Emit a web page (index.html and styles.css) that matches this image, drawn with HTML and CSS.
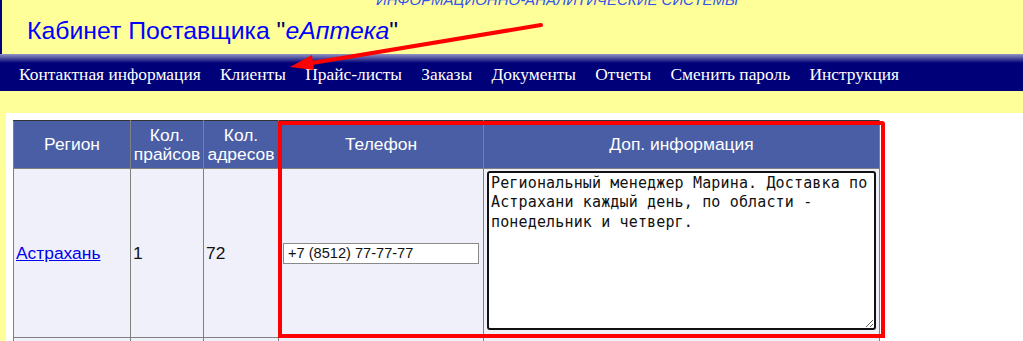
FILE: index.html
```html
<!DOCTYPE html>
<html lang="ru">
<head>
    <meta charset="UTF-8">
    <title>Кабинет Поставщика "еАптека"</title>
    <link rel="stylesheet" href="styles.css">
</head>
<body>
    <div class="header">
        <div class="caption">ИНФОРМАЦИОННО-АНАЛИТИЧЕСКИЕ СИСТЕМЫ</div>
        <div class="title">Кабинет Поставщика <span class="q">"</span><i>еАптека</i><span class="q">"</span></div>
    </div>
    <div class="nav">
        <a href="#">Контактная информация</a>
        <a href="#">Клиенты</a>
        <a href="#">Прайс-листы</a>
        <a href="#">Заказы</a>
        <a href="#">Документы</a>
        <a href="#">Отчеты</a>
        <a href="#">Сменить пароль</a>
        <a href="#">Инструкция</a>
    </div>
    <div class="spacer"></div>
    <div class="panel">
        <table class="regions">
            <tr>
                <th class="c-region">Регион</th>
                <th class="c-num">Кол.<br>прайсов</th>
                <th class="c-num2">Кол.<br>адресов</th>
                <th class="c-phone">Телефон</th>
                <th class="c-info">Доп. информация</th>
            </tr>
            <tr>
                <td><a href="#">Астрахань</a></td>
                <td>1</td>
                <td>72</td>
                <td><input class="phone" type="text" value="+7 (8512) 77-77-77"></td>
                <td><textarea class="info">Региональный менеджер Марина. Доставка по Астрахани каждый день, по области - понедельник и четверг.</textarea></td>
            </tr>
            <tr>
                <td class="next">&nbsp;</td>
                <td class="next"></td>
                <td class="next"></td>
                <td class="next"></td>
                <td class="next"></td>
            </tr>
        </table>
    </div>

    <!-- пометки поверх скриншота -->
    <div class="mark"></div>
    <svg class="arrow" width="1023" height="100" viewBox="0 0 1023 100">
        <line x1="541" y1="25" x2="300" y2="65" stroke="#ff0000" stroke-width="4" stroke-linecap="round"/>
        <polygon points="290,67 312,55 314,70" fill="#ff0000"/>
    </svg>
</body>
</html>
```

FILE: styles.css
```css
body {
    margin: 0;
    background: #ffff99;
    font-family: "Liberation Sans", Arial, sans-serif;
    position: relative;
    overflow: hidden;
}
.header {
    height: 54px;
    border-left: 2px solid #000080;
    position: relative;
}
.caption {
    position: absolute;
    top: -9px;
    left: 374px;
    font-size: 15px;
    font-style: italic;
    color: #3355ee;
}
.title {
    padding: 17px 0 0 25px;
    font-size: 24.8px;
    color: #0000ff;
}
.title .q {
    color: #000066;
}
.nav {
    height: 37px;
    background: linear-gradient(#9494c4 0, #5252a0 4px, #000078 9px, #000078 100%);
    padding: 3px 0 0 19px;
    display: flex;
    align-items: center;
    box-sizing: border-box;
    gap: 19.3px;
}
.nav a {
    color: #fff;
    text-decoration: none;
    font-family: "Liberation Serif", "Times New Roman", serif;
    font-size: 17.4px;
}
.spacer {
    height: 22px;
}
.panel {
    background: #fff;
    margin-left: 6px;
    padding: 7px;
    height: 300px;
}
.regions {
    border-collapse: collapse;
    border: 1px solid #333;
    font-size: 17.4px;
}
.regions th {
    background: #4a5ea6;
    color: #fff;
    font-weight: normal;
    height: 47px;
    line-height: 19px;
    border: 1px solid #808080;
    border-top: 1px solid #333;
    padding: 0;
}
.c-region { width: 116px; }
.c-num { width: 72px; }
.c-num2 { width: 74px; }
.c-phone { width: 204px; }
.c-info { width: 395px; }
.regions td {
    background: #f0f0fa;
    border: 1px solid #808080;
    padding: 0 2px;
    vertical-align: middle;
    height: 168px;
    color: #111;
}
.regions td a {
    color: #0000ee;
}
.regions td.next {
    height: 30px;
}
.phone {
    width: 196px;
    height: 21px;
    box-sizing: border-box;
    border: 1px solid #8a8a8a;
    margin: 0 0 0 2px;
    padding: 0 4px;
    font-family: "Liberation Sans", Arial, sans-serif;
    font-size: 14.6px;
    color: #111;
    display: block;
}
.info {
    display: block;
    width: 389px;
    height: 159px;
    box-sizing: border-box;
    border: 2px solid #111;
    border-radius: 3px;
    margin: 1px 0 7px 1px;
    padding: 1px 2px;
    font-family: "DejaVu Sans Mono", monospace;
    font-size: 15px;
    letter-spacing: 0.15px;
    line-height: 19.5px;
    color: #111;
    resize: both;
}
.mark {
    position: absolute;
    left: 278px;
    top: 121px;
    width: 599px;
    height: 209px;
    border: 4px solid #ff0000;
    border-radius: 0 3px 0 0;
}
.arrow {
    position: absolute;
    left: 0;
    top: 0;
}
```
